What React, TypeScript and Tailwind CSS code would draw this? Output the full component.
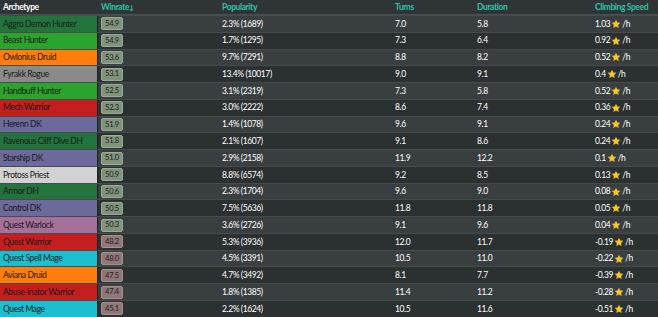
import React from "react";

type Row = {
  name: string;
  color: string;
  wr: string;
  pop: string;
  turns: string;
  dur: string;
  speed: string;
};

const rows: Row[] = [
  { name: "Aggro Demon Hunter", color: "bg-[#23733d]", wr: "54.9", pop: "2.3% (1689)", turns: "7.0", dur: "5.8", speed: "1.03" },
  { name: "Beast Hunter", color: "bg-[#2aa42b]", wr: "54.9", pop: "1.7% (1295)", turns: "7.3", dur: "6.4", speed: "0.92" },
  { name: "Owlonius Druid", color: "bg-[#ff7d0a]", wr: "53.6", pop: "9.7% (7291)", turns: "8.8", dur: "8.2", speed: "0.52" },
  { name: "Fyrakk Rogue", color: "bg-[#8a8a8a]", wr: "53.1", pop: "13.4% (10017)", turns: "9.0", dur: "9.1", speed: "0.4" },
  { name: "Handbuff Hunter", color: "bg-[#2aa42b]", wr: "52.5", pop: "3.1% (2319)", turns: "7.3", dur: "5.8", speed: "0.52" },
  { name: "Mech Warrior", color: "bg-[#c41e1e]", wr: "52.3", pop: "3.0% (2222)", turns: "8.6", dur: "7.4", speed: "0.36" },
  { name: "Herenn DK", color: "bg-[#6c699c]", wr: "51.9", pop: "1.4% (1078)", turns: "9.6", dur: "9.1", speed: "0.24" },
  { name: "Ravenous Cliff Dive DH", color: "bg-[#23733d]", wr: "51.8", pop: "2.1% (1607)", turns: "9.1", dur: "8.6", speed: "0.24" },
  { name: "Starship DK", color: "bg-[#6c699c]", wr: "51.0", pop: "2.9% (2158)", turns: "11.9", dur: "12.2", speed: "0.1" },
  { name: "Protoss Priest", color: "bg-[#d2d2d2]", wr: "50.9", pop: "8.8% (6574)", turns: "9.2", dur: "8.5", speed: "0.13" },
  { name: "Armor DH", color: "bg-[#23733d]", wr: "50.6", pop: "2.3% (1704)", turns: "9.6", dur: "9.0", speed: "0.08" },
  { name: "Control DK", color: "bg-[#6c699c]", wr: "50.5", pop: "7.5% (5636)", turns: "11.8", dur: "11.8", speed: "0.05" },
  { name: "Quest Warlock", color: "bg-[#a6709a]", wr: "50.3", pop: "3.6% (2726)", turns: "9.1", dur: "9.6", speed: "0.04" },
  { name: "Quest Warrior", color: "bg-[#c41e1e]", wr: "48.2", pop: "5.3% (3936)", turns: "12.0", dur: "11.7", speed: "-0.19" },
  { name: "Quest Spell Mage", color: "bg-[#1bbfd0]", wr: "48.0", pop: "4.5% (3391)", turns: "10.5", dur: "11.0", speed: "-0.22" },
  { name: "Aviana Druid", color: "bg-[#ff7d0a]", wr: "47.5", pop: "4.7% (3492)", turns: "8.1", dur: "7.7", speed: "-0.39" },
  { name: "Abuse-inator Warrior", color: "bg-[#c41e1e]", wr: "47.4", pop: "1.8% (1385)", turns: "11.4", dur: "11.2", speed: "-0.28" },
  { name: "Quest Mage", color: "bg-[#1bbfd0]", wr: "45.1", pop: "2.2% (1624)", turns: "10.5", dur: "11.6", speed: "-0.51" },
];

function Star() {
  return (
    <svg width="10" height="10" viewBox="0 0 24 24" className="ml-[1px] mr-[1px] inline-block">
      <path
        d="M12 1.5l3.2 6.7 7.3.9-5.4 5.1 1.4 7.3L12 18 5.5 21.5 6.9 14.2 1.5 9.1l7.3-.9z"
        fill="#f6c42d"
      />
    </svg>
  );
}

export default function App() {
  return (
    <div
      className="w-[658px] h-[317px] overflow-hidden bg-[#2d3233] text-[8.5px] tracking-[-0.4px] leading-none"
      style={{ fontFamily: "Lato, 'Noto Sans', sans-serif" }}
    >
      <div className="flex h-[15px] items-center bg-[#2f3436] border-b border-[#4a4f51] font-bold">
        <div className="w-[98px] pl-[3px] text-white">Archetype</div>
        <div className="w-[124px] pl-[3px] text-[#2fc3a4]">Winrate<span className="text-[7px]">↓</span></div>
        <div className="w-[173px] text-[#2fc3a4]">Popularity</div>
        <div className="w-[82px] text-[#2fc3a4]">Turns</div>
        <div className="w-[118px] text-[#2fc3a4]">Duration</div>
        <div className="flex-1 text-[#2fc3a4]">Climbing Speed</div>
      </div>
      {rows.map((r, i) => {
        const good = parseFloat(r.wr) >= 50;
        return (
          <div
            key={r.name}
            className={`flex h-[16.78px] border-t border-[#464b4d] first:border-t-0 ${
              i % 2 === 0 ? "bg-[#393e40]" : "bg-[#2b3031]"
            }`}
          >
            <div className={`w-[97px] flex items-center pl-[3px] text-[#1a1a1a] ${r.color}`}>{r.name}</div>
            <div className="w-[1px] bg-[#1e2223]" />
            <div className="w-[124px] flex items-center pl-[3px]">
              <span
                className={`inline-flex items-center justify-center w-[22px] h-[13px] rounded-[2px] border text-[7.5px] tracking-[-0.2px] text-[#1c1c1c] ${
                  good ? "bg-[#80937b] border-[#9aab95]" : "bg-[#917777] border-[#a68f8f]"
                }`}
              >
                {r.wr}
              </span>
            </div>
            <div className="w-[173px] flex items-center text-white">{r.pop}</div>
            <div className="w-[82px] flex items-center text-white">{r.turns}</div>
            <div className="w-[118px] flex items-center text-white">{r.dur}</div>
            <div className="flex-1 flex items-center text-white">
              {r.speed}
              <Star />/h
            </div>
          </div>
        );
      })}
    </div>
  );
}
